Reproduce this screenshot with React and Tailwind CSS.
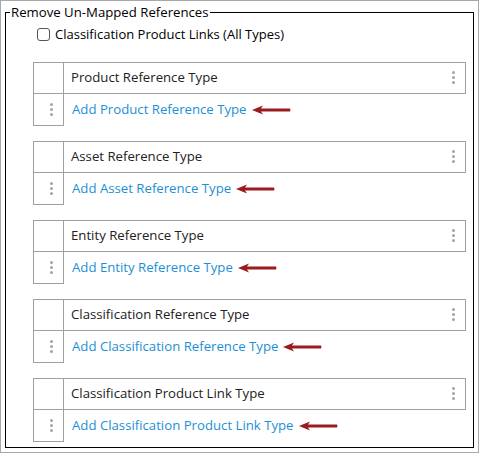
import React from 'react';

const items = [
  { header: 'Product Reference Type', link: 'Add Product Reference Type' },
  { header: 'Asset Reference Type', link: 'Add Asset Reference Type' },
  { header: 'Entity Reference Type', link: 'Add Entity Reference Type' },
  { header: 'Classification Reference Type', link: 'Add Classification Reference Type' },
  { header: 'Classification Product Link Type', link: 'Add Classification Product Link Type' },
];

const Dots = () => (
  <div className="flex flex-col gap-[2px]">
    <span className="block w-[3px] h-[3px] rounded-full bg-[#a3a3a3]" />
    <span className="block w-[3px] h-[3px] rounded-full bg-[#a3a3a3]" />
    <span className="block w-[3px] h-[3px] rounded-full bg-[#a3a3a3]" />
  </div>
);

const Arrow = () => (
  <svg width="39" height="10" viewBox="0 0 39 10" className="ml-[5px]">
    <path d="M0 5 L11 0.5 L9 3.5 L38 3.5 Q39 5 38 6.5 L9 6.5 L11 9.5 Z" fill="#9b1c1f" />
  </svg>
);

const RefBox = ({ header, link }) => (
  <div className="flex flex-col w-[433px]">
    <div className="flex h-[32px]">
      <div className="w-[31px] border border-[#a0a0a0]" />
      <div className="flex-1 flex items-center justify-between border border-l-0 border-[#a0a0a0] pl-[7px] pr-[10px] text-[#222]">
        <span>{header}</span>
        <Dots />
      </div>
    </div>
    <div className="flex h-[32px]">
      <div className="w-[31px] flex items-center pl-[16px] border border-t-0 border-[#a0a0a0]">
        <Dots />
      </div>
      <div className="flex items-center pl-[8px] text-[#1e8fd5]">
        <span>{link}</span>
        <Arrow />
      </div>
    </div>
  </div>
);

const App = () => {
  return (
    <div
      className="w-[479px] h-[453px] border border-[#a8a8a8] bg-white text-[13.2px]"
      style={{ fontFamily: '"Open Sans", "Noto Sans", sans-serif' }}
    >
      <fieldset className="mx-[4px] mt-[2px] h-[445px] border border-black">
        <legend className="ml-[4px] px-[1px] text-[13.2px] leading-[18px] text-black">
          Remove Un-Mapped References
        </legend>
        <div className="pl-[27px]">
          <label className="flex items-center gap-[5px] ml-[4px] mt-[4px] text-[13px] text-black">
            <span className="block w-[13px] h-[13px] rounded-[3px] border border-[#555] bg-white" />
            Classification Product Links (All Types)
          </label>
          <div className="flex flex-col gap-[15px] mt-[17px]">
            {items.map((it) => (
              <RefBox key={it.header} header={it.header} link={it.link} />
            ))}
          </div>
        </div>
      </fieldset>
    </div>
  );
};

export default App;
